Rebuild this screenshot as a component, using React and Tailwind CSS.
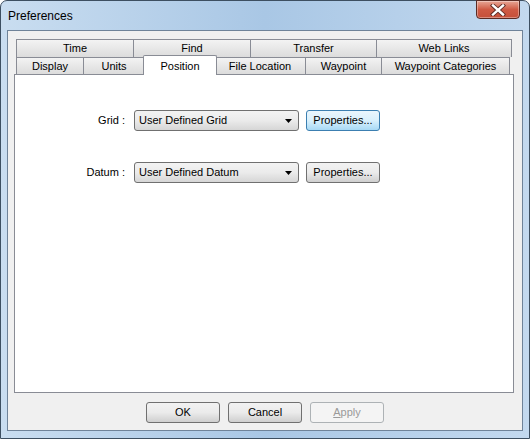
import React from 'react'

// Classic two-row tab strip; row 2 sits against the page.
const TOP_TABS = [
  { label: 'Time', w: 'w-[118px]' },
  { label: 'Find', w: 'w-[118px]' },
  { label: 'Transfer', w: 'w-[127px]' },
  { label: 'Web Links', w: 'w-[136px]' },
]
const FRONT_TABS = [
  { label: 'Display', w: 'w-[68px]' },
  { label: 'Units', w: 'w-[62px]' },
  { label: 'Position', w: 'w-[74px]', active: true },
  { label: 'File Location', w: 'w-[92px]' },
  { label: 'Waypoint', w: 'w-[77px]' },
  { label: 'Waypoint Categories', w: 'w-[129px]' },
]

function Tab({ label, w, active }) {
  if (active) {
    return (
      <div className={`${w} relative z-10 -mx-[2px] -mt-[2px] h-[20px] -mb-px flex justify-center pt-[2px] bg-white border border-b-0 border-[#898c95] rounded-t-[2px]`}>
        {label}
      </div>
    )
  }
  return (
    <div className={`${w} h-[18px] -ml-px first:ml-0 flex items-center justify-center border border-b-0 border-[#898c95] bg-gradient-to-b from-[#f3f3f3] to-[#dcdcdc]`}>
      {label}
    </div>
  )
}

function Combo({ value }) {
  return (
    <div className="w-[165px] h-[21px] flex items-center pl-[4px] pr-[6px] border border-[#707070] rounded-[3px] bg-gradient-to-b from-[#f3f3f3] via-[#ebebeb] to-[#d6d6d6]">
      <span className="flex-1">{value}</span>
      <svg width="7" height="4" viewBox="0 0 7 4"><path d="M0 0h7L3.5 4z" fill="#000" /></svg>
    </div>
  )
}

function Button({ children, hot, disabled, w = 'w-[74px]' }) {
  const skin = disabled
    ? 'border-[#adb2b5] bg-[#f4f4f4] text-[#9a9a9a]'
    : hot
      ? 'border-[#3c7fb1] bg-gradient-to-b from-[#eaf6fd] via-[#d9f0fc] to-[#a7d9f5]'
      : 'border-[#707070] bg-gradient-to-b from-[#f2f2f2] via-[#ebebeb] to-[#cfcfcf]'
  return (
    <div className={`${w} h-[21px] flex items-center justify-center border rounded-[3px] ${skin}`}>
      {children}
    </div>
  )
}

export default function App() {
  return (
    <div className="w-[530px] h-[439px] flex flex-col rounded-t-[7px] border border-[#3d4f61] bg-gradient-to-r from-[#c9ddf0] via-[#a9c7e5] to-[#c3d9ef] text-[11px] text-black font-['Liberation_Sans',Arial,sans-serif]">
      {/* Title bar */}
      <div className="h-[29px] flex items-start">
        <div className="flex-1 pl-[7px] pt-[6px] text-[12px]">Preferences</div>
        <div className="mr-[9px] w-[44px] h-[19px] -mt-px flex items-center justify-center rounded-b-[4px] border border-[#5a2b24] bg-gradient-to-b from-[#e7a696] via-[#cf5a44] to-[#c5503a] shadow-[inset_0_0_0_1px_rgba(255,255,255,0.35)]">
          <svg width="16" height="12" viewBox="0 0 16 12">
            <path d="M3 1.5l10 9M13 1.5l-10 9" stroke="#5b2b24" strokeWidth="4.2" strokeLinecap="square" />
            <path d="M3 1.5l10 9M13 1.5l-10 9" stroke="#fff" strokeWidth="2.4" strokeLinecap="square" />
          </svg>
        </div>
      </div>

      {/* Client area */}
      <div className="flex-1 mx-[6px] mb-[7px] flex flex-col bg-[#f0f0f0] border border-[#6f8399] pl-[6px] pr-[8px] pt-[8px]">
        <div className="flex flex-col px-[2px]">
          <div className="flex">
            {TOP_TABS.map(t => <Tab key={t.label} {...t} />)}
          </div>
          <div className="flex h-[17px]">
            {FRONT_TABS.map(t => (
              t.active
                ? <Tab key={t.label} {...t} />
                : <div key={t.label} className={`${t.w} h-[17px] -ml-px first:ml-0 flex items-center justify-center border border-b-0 border-[#898c95] bg-gradient-to-b from-[#f3f3f3] to-[#dcdcdc]`}>{t.label}</div>
            ))}
          </div>
        </div>

        <div className="h-[319px] bg-white border border-[#898c95] flex flex-col pt-[35px] gap-[31px]">
          <div className="flex items-center">
            <div className="w-[119px] pr-[9px] text-right">Grid :</div>
            <Combo value="User Defined Grid" />
            <div className="ml-[7px]"><Button hot>Properties...</Button></div>
          </div>
          <div className="flex items-center">
            <div className="w-[119px] pr-[9px] text-right">Datum :</div>
            <Combo value="User Defined Datum" />
            <div className="ml-[7px]"><Button>Properties...</Button></div>
          </div>
        </div>

        <div className="flex-1 flex justify-center items-start pt-[9px] gap-[8px] pl-[2px]">
          <Button>OK</Button>
          <Button>Cancel</Button>
          <Button disabled><span><span className="underline">A</span>pply</span></Button>
        </div>
      </div>
    </div>
  )
}
